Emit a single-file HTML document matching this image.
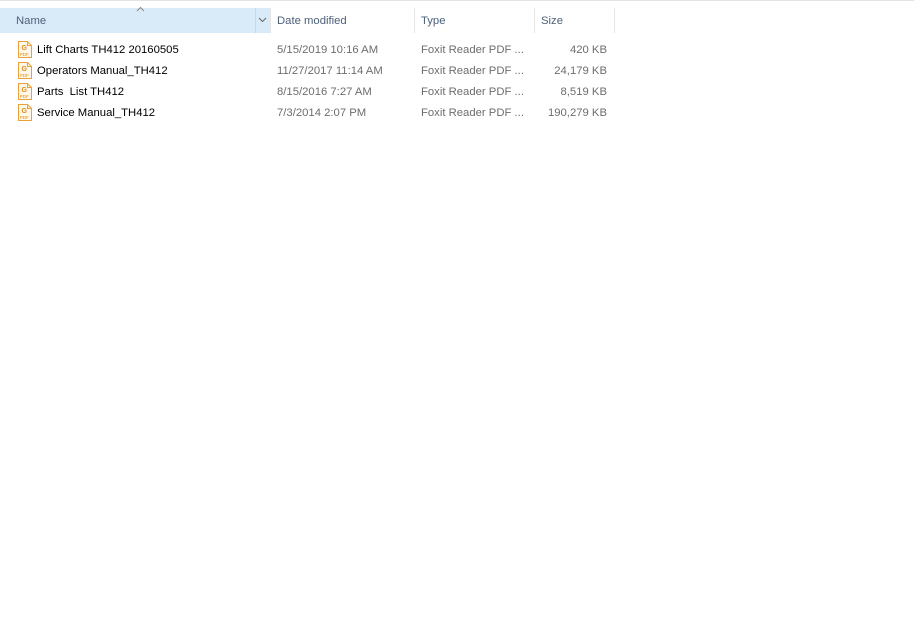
<!DOCTYPE html>
<html><head><style>
body{margin:0;width:914px;height:632px;background:#fff;font-family:"Liberation Sans",sans-serif;font-size:11.3px;color:#000;position:relative;overflow:hidden}
.top{position:absolute;left:0;top:0;width:914px;height:1px;background:#e3e3e3}
.hdr{position:absolute;top:9px;height:25px;line-height:25px;color:#4c607a}
.sel{position:absolute;left:0;top:8px;width:270px;height:25px;background:#d9ebf9}
.div{position:absolute;top:8px;width:1px;height:25px;background:#e5e5e5}
.row{position:absolute;left:0;height:21px;line-height:21px;width:620px}
.row span{position:absolute;white-space:nowrap;top:1px}
.g{color:#6d6d6d}
.ic{position:absolute;left:18px;top:2px}
</style></head><body>
<div class="top"></div>
<div class="sel"></div>
<div class="div" style="left:255px;background:#c4d9ec"></div>
<div class="div" style="left:270px"></div>
<div class="div" style="left:414px"></div>
<div class="div" style="left:534px"></div>
<div class="div" style="left:614px"></div>
<svg style="position:absolute;left:136px;top:6px" width="9" height="6"><path d="M1 5 L4.5 1.5 L8 5" fill="none" stroke="#8a8a8a" stroke-width="1"/></svg>
<svg style="position:absolute;left:258px;top:17px" width="9" height="6"><path d="M1 1 L4.5 4.5 L8 1" fill="none" stroke="#6a6a6a" stroke-width="1"/></svg>
<div class="hdr" style="left:16px">Name</div>
<div class="hdr" style="left:277px">Date modified</div>
<div class="hdr" style="left:421px">Type</div>
<div class="hdr" style="left:541px">Size</div>

<div class="row" style="top:39px">
<svg class="ic" width="14" height="17"><path d="M0.5 0.5 H9.5 L13.5 4.5 V16.5 H0.5 Z" fill="#fff8e8" stroke="#e9a23b"/><path d="M9.5 0.5 V4.5 H13.5" fill="none" stroke="#e9a23b"/><text x="3.5" y="9" font-size="7" font-family="Liberation Sans" fill="#e08a1e" font-weight="bold">G</text><text x="1.8" y="15" font-size="4.5" font-family="Liberation Sans" fill="#e08a1e">PDF</text></svg>
<span style="left:37px">Lift Charts TH412 20160505</span><span class="g" style="left:277px">5/15/2019 10:16 AM</span><span class="g" style="left:421px">Foxit Reader PDF ...</span><span class="g" style="right:13px">420 KB</span></div>

<div class="row" style="top:60px">
<svg class="ic" width="14" height="17"><path d="M0.5 0.5 H9.5 L13.5 4.5 V16.5 H0.5 Z" fill="#fff8e8" stroke="#e9a23b"/><path d="M9.5 0.5 V4.5 H13.5" fill="none" stroke="#e9a23b"/><text x="3.5" y="9" font-size="7" font-family="Liberation Sans" fill="#e08a1e" font-weight="bold">G</text><text x="1.8" y="15" font-size="4.5" font-family="Liberation Sans" fill="#e08a1e">PDF</text></svg>
<span style="left:37px">Operators Manual_TH412</span><span class="g" style="left:277px">11/27/2017 11:14 AM</span><span class="g" style="left:421px">Foxit Reader PDF ...</span><span class="g" style="right:13px">24,179 KB</span></div>

<div class="row" style="top:81px">
<svg class="ic" width="14" height="17"><path d="M0.5 0.5 H9.5 L13.5 4.5 V16.5 H0.5 Z" fill="#fff8e8" stroke="#e9a23b"/><path d="M9.5 0.5 V4.5 H13.5" fill="none" stroke="#e9a23b"/><text x="3.5" y="9" font-size="7" font-family="Liberation Sans" fill="#e08a1e" font-weight="bold">G</text><text x="1.8" y="15" font-size="4.5" font-family="Liberation Sans" fill="#e08a1e">PDF</text></svg>
<span style="left:37px">Parts&nbsp; List TH412</span><span class="g" style="left:277px">8/15/2016 7:27 AM</span><span class="g" style="left:421px">Foxit Reader PDF ...</span><span class="g" style="right:13px">8,519 KB</span></div>

<div class="row" style="top:102px">
<svg class="ic" width="14" height="17"><path d="M0.5 0.5 H9.5 L13.5 4.5 V16.5 H0.5 Z" fill="#fff8e8" stroke="#e9a23b"/><path d="M9.5 0.5 V4.5 H13.5" fill="none" stroke="#e9a23b"/><text x="3.5" y="9" font-size="7" font-family="Liberation Sans" fill="#e08a1e" font-weight="bold">G</text><text x="1.8" y="15" font-size="4.5" font-family="Liberation Sans" fill="#e08a1e">PDF</text></svg>
<span style="left:37px">Service Manual_TH412</span><span class="g" style="left:277px">7/3/2014 2:07 PM</span><span class="g" style="left:421px">Foxit Reader PDF ...</span><span class="g" style="right:13px">190,279 KB</span></div>
</body></html>
